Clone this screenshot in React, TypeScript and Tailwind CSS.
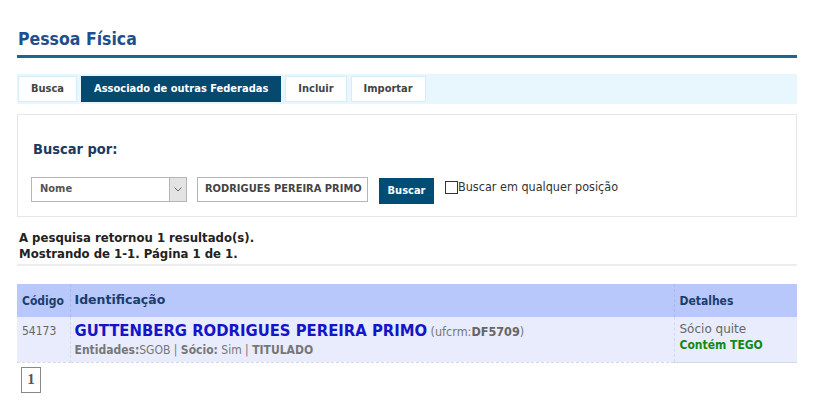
const tabs = [
  { label: "Busca", active: false },
  { label: "Associado de outras Federadas", active: true },
  { label: "Incluir", active: false },
  { label: "Importar", active: false },
];

const App = () => {
  return (
    <div className="w-[834px] h-[409px] bg-white font-['DejaVu_Sans_Condensed','DejaVu_Sans',sans-serif] [font-stretch:condensed] text-[#333]">
      <div className="ml-[17px] w-[780px] pt-[28px]">
        {/* titulo */}
        <h1 className="text-[17.5px] font-bold text-[#1e4f8c] leading-[22px] pl-[1px] pb-[5px] border-b-[3px] border-[#17698b]">
          Pessoa Física
        </h1>

        {/* abas */}
        <div className="mt-[16px] h-[30px] bg-[#e8f6fd] flex items-center gap-[4px] pl-[1px]">
          {tabs.map((t) => (
            <div
              key={t.label}
              className={
                t.active
                  ? "h-[26px] px-[13px] flex items-center bg-[#06496e] text-white text-[11px] font-bold"
                  : "h-[26px] px-[12px] flex items-center bg-white border border-[#d6ecf7] text-[#444] text-[11px] font-bold"
              }
            >
              {t.label}
            </div>
          ))}
        </div>

        {/* busca */}
        <div className="mt-[10px] h-[103px] border border-[#e6e6e6] px-[13px] pt-[24px]">
          <div className="text-[14.5px] font-bold text-[#1c3a5e] pl-[2px]">Buscar por:</div>
          <div className="mt-[16px] flex items-start">
            <div className="w-[156px] h-[25px] border border-[#b5b5b5] flex items-stretch">
              <div className="flex-1 flex items-center pl-[8px] text-[11px] font-bold text-[#555]">Nome</div>
              <div className="w-[17px] bg-[#e3e3e3] border-l border-[#b5b5b5] flex items-center justify-center">
                <svg width="8" height="5" viewBox="0 0 8 5" fill="none">
                  <path d="M0.5 0.5 L4 4 L7.5 0.5" stroke="#666" strokeWidth="1" />
                </svg>
              </div>
            </div>
            <div className="ml-[10px] w-[171px] h-[25px] border border-[#b5b5b5] flex items-center pl-[7px] text-[11px] font-bold text-[#444] whitespace-nowrap">
              RODRIGUES PEREIRA PRIMO
            </div>
            <div className="ml-[11px] mt-[1px] w-[55px] h-[26px] bg-[#004d73] text-white text-[11px] font-bold flex items-center justify-center">
              Buscar
            </div>
            <label className="ml-[11px] mt-[1px] flex items-center text-[12.5px] text-[#333]">
              <span className="w-[13px] h-[13px] border border-[#333] bg-white" />
              Buscar em qualquer posição
            </label>
          </div>
        </div>

        {/* resultado */}
        <div className="mt-[13px] pl-[2px] text-[13px] font-bold text-[#222] leading-[16px]">
          <div>A pesquisa retornou 1 resultado(s).</div>
          <div>Mostrando de 1-1. Página 1 de 1.</div>
        </div>
        <div className="mt-[2px] h-[2px] bg-[#ececec]" />

        <table className="mt-[18px] w-full border-collapse text-[12px]">
          <thead>
            <tr className="bg-[#b8c8fa] h-[33px] text-[#1a3d6e]">
              <th className="w-[53px] text-left font-bold pl-[5px] border-r border-dashed border-[#a9b8e6]">Código</th>
              <th className="text-left font-bold text-[12.5px] font-['DejaVu_Sans',sans-serif] [font-stretch:normal] pl-[4px] border-r border-dashed border-[#a9b8e6]">
                Identificação
              </th>
              <th className="w-[123px] text-left font-bold pl-[5px]">Detalhes</th>
            </tr>
          </thead>
          <tbody>
            <tr className="bg-[#e8ecfc] h-[45px] align-top">
              <td className="pl-[5px] pt-[5px] text-[#666] border-r border-dashed border-[#d4d9ee] border-b border-b-[#d4d9e8]">54173</td>
              <td className="pl-[4px] pt-[4px] border-r border-dashed border-[#d4d9ee] border-b border-b-[#d4d9e8]">
                <div className="leading-[19px]">
                  <span className="text-[16.5px] font-bold text-[#1414c8]">GUTTENBERG RODRIGUES PEREIRA PRIMO</span>{" "}
                  <span className="text-[#777] text-[12.5px]">
                    (ufcrm:<b className="text-[#666]">DF5709</b>)
                  </span>
                </div>
                <div className="text-[#777] leading-[16px]">
                  <b>Entidades:</b>SGOB | <b>Sócio:</b> Sim | <b>TITULADO</b>
                </div>
              </td>
              <td className="pl-[5px] pt-[4px] border-b border-[#d4d9e8] leading-[16px]">
                <div className="text-[#666] font-['DejaVu_Sans',sans-serif] [font-stretch:normal]">Sócio quite</div>
                <div className="text-[#138a13] font-bold">Contém TEGO</div>
              </td>
            </tr>
          </tbody>
        </table>

        <div className="mt-[4px] ml-[4px] w-[20px] h-[26px] border border-[#888] flex items-center justify-center font-['Liberation_Serif',serif] font-bold text-[15px] text-[#555]">
          1
        </div>
      </div>
    </div>
  );
};

export default App;
